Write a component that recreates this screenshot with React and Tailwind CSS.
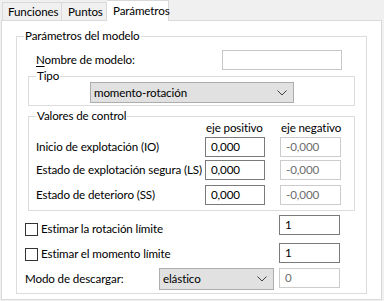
import React from "react";

const Chevron = () => (
  <svg width="10" height="6" viewBox="0 0 10 6" className="block">
    <path d="M0.5 0.5 L5 5 L9.5 0.5" fill="none" stroke="#404040" strokeWidth="1" />
  </svg>
);

const Input = ({ value, disabled, className = "" }) => (
  <div
    className={
      "h-[20px] bg-white border flex items-center pl-[5px] shrink-0 " +
      (disabled ? "border-[#cccccc] text-[#6d6d6d] " : "border-[#7a7a7a] text-black ") +
      className
    }
  >
    {value}
  </div>
);

const Select = ({ value, className = "" }) => (
  <div
    className={
      "bg-[#e1e1e1] border border-[#adadad] flex items-center justify-between pl-[3px] pr-[6px] shrink-0 " +
      className
    }
  >
    <span>{value}</span>
    <Chevron />
  </div>
);

const Checkbox = () => (
  <div className="w-[13px] h-[13px] border border-[#333333] bg-white shrink-0" />
);

const Group = ({ label, className = "", children }) => (
  <div className={"relative border border-[#dcdcdc] " + className}>
    <span className="absolute left-[7px] top-[-9px] bg-white px-[1px] leading-[16px]">{label}</span>
    {children}
  </div>
);

export default function App() {
  return (
    <div
      className="w-[384px] h-[301px] bg-[#f0f0f0] text-[11.6px] leading-[16px] tracking-[-0.12px] text-black whitespace-nowrap"
      style={{ fontFamily: "Lato, sans-serif" }}
    >
      {/* tabs */}
      <div className="flex items-end h-[20px] pl-[2px] relative z-10">
        <div className="h-[18px] border border-b-0 border-[#d9d9d9] pl-[5px] flex items-center w-[60px]">Funciones</div>
        <div className="h-[18px] border border-b-0 border-l-0 border-[#d9d9d9] pl-[6px] flex items-center w-[45px]">Puntos</div>
        <div className="h-[21px] -mb-[1px] border border-b-0 border-l-0 border-[#d9d9d9] bg-white pl-[6px] flex items-start pt-[2px] w-[62px]">Parámetros</div>
      </div>
      {/* page */}
      <div className="ml-[1px] w-[381px] h-[280px] bg-white border border-[#d9d9d9] pt-[15px] px-[14px]">
        <Group label="Parámetros del modelo" className="h-[258px]">
          <div className="flex items-center h-[20px] mt-[13px]">
            <span className="pl-[19px]">
              <span className="underline underline-offset-2">N</span>ombre de modelo:
            </span>
            <div className="ml-auto mr-[24px] w-[120px] h-[20px] border border-[#c8c8c8] bg-white" />
          </div>

          <Group label="Tipo" className="mx-[11px] mt-[6px] h-[30px]">
            <Select value="momento-rotación" className="ml-[61px] mt-[5px] w-[204px] h-[21px]" />
          </Group>

          <Group label="Valores de control" className="mx-[11px] mt-[10px] h-[95px]">
            <div className="flex mt-[3px] h-[16px] pr-[13px]">
              <span className="flex-1" />
              <span className="w-[60px] pl-[1px]">eje positivo</span>
              <span className="w-[61px] ml-[15px] pl-[1px]">eje negativo</span>
            </div>
            {[
              ["Inicio de explotación (IO)", "mt-[1px]"],
              ["Estado de explotación segura (LS)", "mt-[3px]"],
              ["Estado de deterioro (SS)", "mt-[5px]"],
            ].map(([label, mt]) => (
              <div key={label} className={"flex items-center pr-[13px] " + mt}>
                <span className="flex-1 min-w-0 pl-[7px]">{label}</span>
                <Input value="0,000" className="w-[60px]" />
                <Input value="-0,000" disabled className="w-[61px] ml-[15px]" />
              </div>
            ))}
          </Group>

          <div className="flex items-start mt-[4px] pl-[8px] pr-[26px]">
            <div className="flex items-center gap-[3px] mt-[6px]">
              <Checkbox />
              <span>Estimar la rotación límite</span>
            </div>
            <Input value="1" className="ml-auto w-[61px]" />
          </div>

          <div className="flex items-start mt-[6px] pl-[8px] pr-[26px]">
            <div className="flex items-center gap-[3px] mt-[3px]">
              <Checkbox />
              <span>Estimar el momento límite</span>
            </div>
            <Input value="1" className="ml-auto w-[61px]" />
          </div>

          <div className="flex items-start mt-[5px] pl-[8px] pr-[26px]">
            <span className="mt-[3px]">Modo de descargar:</span>
            <Select value="elástico" className="ml-auto w-[115px] h-[22px]" />
            <Input value="0" disabled className="ml-[5px] w-[61px]" />
          </div>
        </Group>
      </div>
    </div>
  );
}
